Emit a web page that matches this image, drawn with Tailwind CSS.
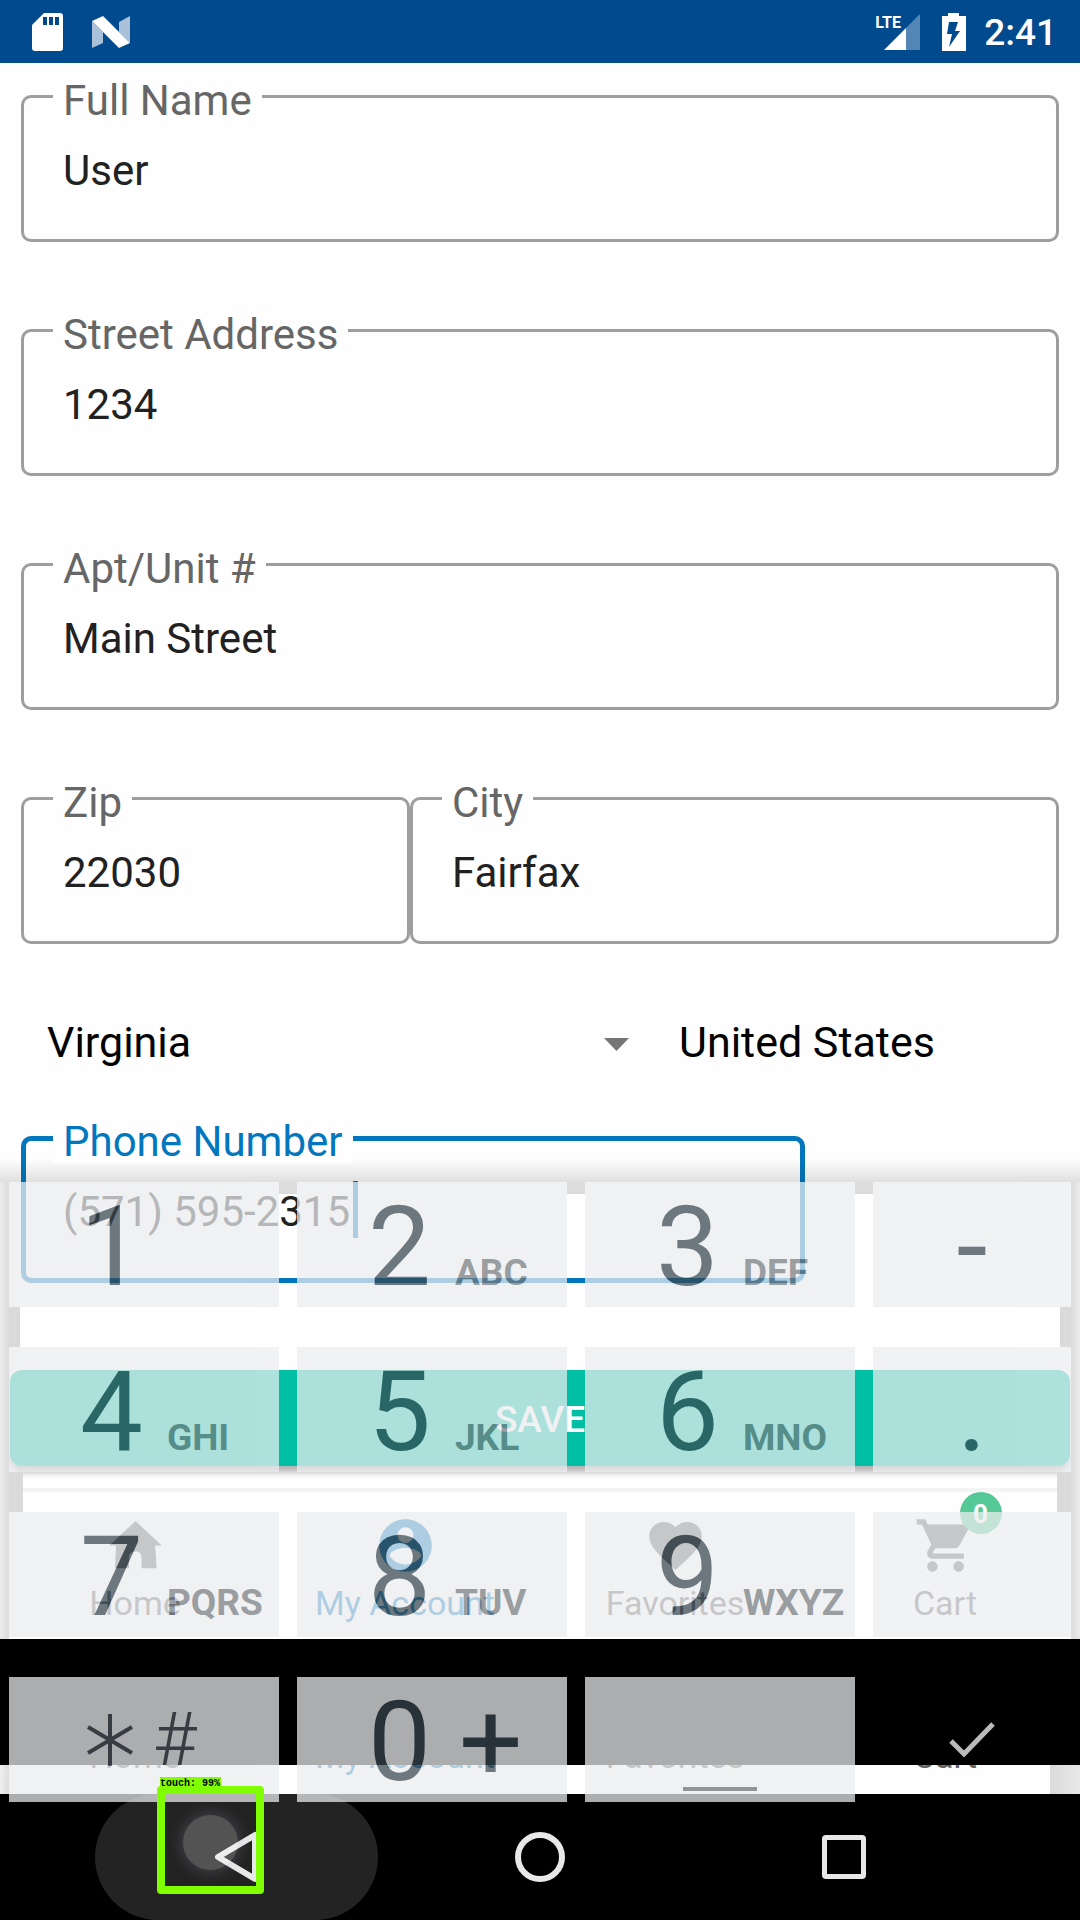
<!DOCTYPE html>
<html lang="en">
<head>
<meta charset="utf-8">
<meta name="viewport" content="width=device-width, initial-scale=1">
<title>Shipping address</title>
<script src="https://cdn.jsdelivr.net/npm/@tailwindcss/browser@4"></script>
</head>
<body class="bg-black">
<div class="relative flex min-h-screen w-full flex-col overflow-hidden bg-[#fefefe] font-['Roboto',sans-serif] text-[42px] leading-[42px] text-[#212121]">

  <!-- Status bar -->
  <header class="flex h-[63px] shrink-0 items-center justify-between bg-[#004a8d] pr-[23px] pl-8 text-white">
    <div class="flex items-center gap-[28px]">
      <svg class="h-[38px] w-[32px]" viewBox="0 0 32 38" fill="none" aria-label="SD card"><path fill="#fff" d="M12 0h16a3 3 0 0 1 3 3v32a3 3 0 0 1-3 3H3a3 3 0 0 1-3-3V12z"/><path fill="#004a8d" d="M11 4h4v8h-4zM17 4h4v8h-4zM23 4h4v8h-4z"/></svg>
      <svg class="h-[32px] w-[38px]" viewBox="0 0 38 32" aria-label="Android N"><path fill="#a9c0d8" d="M0 5l11 11v11L0 32zM27 6l11-6v27L27 16z"/><path fill="#fff" d="M0 5L11 0l27 27-11 5z"/></svg>
    </div>
    <div class="flex items-center">
      <div class="relative h-[38px] w-[46px]">
        <svg class="size-full" viewBox="0 0 46 38" aria-label="Signal"><path fill="#fff" d="M9 37L31 15v22z"/><path fill="#5486b5" d="M31 15L45 1v36H31z"/></svg>
        <span class="absolute top-0 left-0 font-['Liberation_Sans_Narrow','Roboto',sans-serif] text-[16px] leading-[20px] font-bold">LTE</span>
      </div>
      <svg class="ml-[21px] h-[38px] w-[24px]" viewBox="0 0 24 38" aria-label="Battery charging"><path fill="#fff" d="M6 0h11v3h7v35H0V3h6z"/><path fill="#004a8d" d="M7 9h9l-3 9h5L7 34l3-13H5z"/></svg>
      <time class="ml-[18px] pt-[2px] text-[37px] leading-[40px] font-medium">2:41</time>
    </div>
  </header>

  <main class="flex flex-1 flex-col">
    <form class="px-[21px] pt-8">
      <div class="grid gap-[87px]">
        <label class="relative block">
          <span class="absolute -top-[15px] left-8 bg-[#fefefe] px-[10px] text-[#666]">Full Name</span>
          <input type="text" value="User" class="block h-[147px] w-full rounded-[10px] border-3 border-[#9e9e9e] pt-1 pl-[39px]">
        </label>
        <label class="relative block">
          <span class="absolute -top-[15px] left-8 bg-[#fefefe] px-[10px] text-[#666]">Street Address</span>
          <input type="text" value="1234" class="block h-[147px] w-full rounded-[10px] border-3 border-[#9e9e9e] pt-1 pl-[39px]">
        </label>
        <label class="relative block">
          <span class="absolute -top-[15px] left-8 bg-[#fefefe] px-[10px] text-[#666]">Apt/Unit #</span>
          <input type="text" value="Main Street" class="block h-[147px] w-full rounded-[10px] border-3 border-[#9e9e9e] pt-1 pl-[39px]">
        </label>
        <div class="grid grid-cols-[389fr_649fr]">
          <label class="relative block">
            <span class="absolute -top-[15px] left-8 bg-[#fefefe] px-[10px] text-[#666]">Zip</span>
            <input type="text" value="22030" class="block h-[147px] w-full rounded-[10px] border-3 border-[#9e9e9e] pt-1 pl-[39px]">
          </label>
          <label class="relative block">
            <span class="absolute -top-[15px] left-8 bg-[#fefefe] px-[10px] text-[#666]">City</span>
            <input type="text" value="Fairfax" class="block h-[147px] w-full rounded-[10px] border-3 border-[#9e9e9e] pt-1 pl-[39px]">
          </label>
        </div>
      </div>

      <div class="grid h-[192px] grid-cols-[632fr_406fr] items-center text-black">
        <div class="flex items-center pr-6">
          <select aria-label="State" class="h-16 flex-1 appearance-none pt-1 pl-[26px] text-[43px] leading-[60px]"><option>Virginia</option></select>
          <svg class="mt-2 h-[13px] w-[25px]" viewBox="0 0 25 13" aria-hidden="true"><path fill="#757575" d="M0 0h25L12.500 13z"/></svg>
        </div>
        <select aria-label="Country" class="h-16 appearance-none pt-1 pl-[26px] text-[43px] leading-[60px]"><option>United States</option></select>
      </div>

      <div class="grid grid-cols-[784fr_254fr]">
        <label class="relative block">
          <span class="absolute -top-[15px] left-8 z-10 bg-[#fefefe] px-[10px] text-[#0277bd]">Phone Number</span>
          <input type="tel" value="(571) 595-2315" class="block h-[147px] w-full rounded-[10px] border-5 border-[#0277bd] pt-1 pl-[37px]">
          <span class="absolute top-[45px] left-[332px] h-[57px] w-[5px] bg-[#0277bd]"></span>
        </label>
      </div>

      <button type="button" class="-mx-[11px] mt-[87px] flex h-24 w-[calc(100%+22px)] items-center justify-center rounded-[12px] bg-[#00bfa5] pt-[4px] text-[37px] leading-[42px] font-medium text-white shadow-[0_6px_7px_rgba(0,0,0,0.3)]">SAVE</button>
    </form>

    <!-- Tab bar -->
    <nav class="mt-[22px] grid flex-1 grid-cols-4 border-t-4 border-[#f4f4f4] pt-[22px] text-[34px] leading-[36px] text-[#616161]">
      <a href="#" class="flex flex-col items-center gap-2">
        <svg class="size-[63px]" viewBox="0 0 24 24" fill="currentColor" aria-hidden="true"><path d="M12 2.700L2 12h2.600L4.200 20.700H9.500v-4.200c0-1.300 1-2.200 2.500-2.200s2.300.9 2.300 2.200v4.200H20l-.5-8.700H22z"/></svg>
        <span>Home</span>
      </a>
      <a href="#" class="flex flex-col items-center gap-2 text-[#0277bd]">
        <svg class="size-[63px]" viewBox="0 0 24 24" fill="currentColor" aria-hidden="true"><path d="M12 2C6.480 2 2 6.480 2 12s4.480 10 10 10 10-4.480 10-10S17.520 2 12 2zm0 3c1.660 0 3 1.340 3 3s-1.340 3-3 3-3-1.340-3-3 1.340-3 3-3zm0 14.200c-2.500 0-4.710-1.280-6-3.220.03-1.990 4-3.080 6-3.080 1.990 0 5.970 1.090 6 3.080-1.290 1.940-3.500 3.220-6 3.220z"/></svg>
        <span>My Account</span>
      </a>
      <a href="#" class="flex flex-col items-center gap-2">
        <svg class="size-[63px]" viewBox="0 0 24 24" fill="currentColor" aria-hidden="true"><path d="M12 21.350l-1.450-1.320C5.400 15.360 2 12.280 2 8.500 2 5.420 4.420 3 7.500 3c1.740 0 3.410.81 4.500 2.090C13.090 3.810 14.760 3 16.500 3 19.580 3 22 5.420 22 8.500c0 3.780-3.400 6.860-8.550 11.540L12 21.350z"/></svg>
        <span>Favorites</span>
      </a>
      <a href="#" class="flex flex-col items-center gap-2">
        <span class="relative">
          <svg class="size-[63px]" viewBox="0 0 24 24" fill="currentColor" aria-hidden="true"><path d="M7 18c-1.100 0-1.990.9-1.990 2S5.900 22 7 22s2-.9 2-2-.9-2-2-2zM1 2v2h2l3.600 7.590-1.350 2.450c-.16.28-.25.61-.25.96 0 1.100.9 2 2 2h12v-2H7.420c-.14 0-.25-.11-.25-.25l.03-.12.9-1.630h7.450c.75 0 1.410-.41 1.750-1.030l3.580-6.490A1 1 0 0 0 20 4H5.210l-.94-2H1zm16 16c-1.100 0-1.990.9-1.990 2s.89 2 1.990 2 2-.9 2-2-.9-2-2-2z"/></svg>
          <span class="absolute -top-[22px] left-[46px] flex size-[42px] items-center justify-center rounded-full bg-[#55c995] pt-[2px] text-[26px] leading-[30px] font-bold text-white">0</span>
        </span>
        <span>Cart</span>
      </a>
    </nav>
  </main>

  <div class="h-[126px] shrink-0 bg-black"></div>

  <!-- Lower edge of the tab bar as it slides away -->
  <div class="relative flex h-[29px] shrink-0 items-start overflow-hidden bg-[#fefefe] text-[34px] leading-[36px] text-[#616161]" aria-hidden="true">
    <div class="-mt-[27px] grid w-full grid-cols-4 text-center">
      <span>Home</span><span class="text-[#0277bd]">My Account</span><span>Favorites</span><span>Cart</span>
    </div>
    <span class="absolute inset-y-0 left-0 w-[9px] bg-linear-to-r from-[#f0f0f0] to-[#dcdcdc]"></span>
    <span class="absolute inset-y-0 right-0 w-[30px] bg-linear-to-l from-[#e8e8e8] to-[#dadada]"></span>
  </div>

  <!-- System navigation -->
  <nav class="relative flex h-[126px] shrink-0 items-center bg-black">
    <div class="grid w-full grid-cols-[473fr_134fr_473fr]">
      <button type="button" aria-label="Back" class="ml-[95px] flex h-[126px] w-[283px] items-center justify-center rounded-full bg-[#232323]">
        <svg class="h-[52px] w-[46px]" viewBox="0 0 46 52" fill="none" stroke="#e8e8e8" stroke-width="6" stroke-linejoin="round" aria-hidden="true"><path d="M4 26L41 4v44z"/></svg>
      </button>
      <button type="button" aria-label="Home" class="flex items-center justify-center"><span class="size-[50px] rounded-full border-6 border-[#e8e8e8]"></span></button>
      <button type="button" aria-label="Recent apps" class="flex items-center justify-center"><span class="size-[44px] rounded-[4px] border-5 border-[#e8e8e8]"></span></button>
    </div>
    <span class="absolute top-[21px] left-[183px] size-[55px] rounded-full bg-white/22 shadow-[0_0_16px_rgba(180,170,210,0.3)]"></span>
  </nav>

  <!-- Shadow above the keypad -->
  <div class="absolute inset-x-0 top-[1158px] h-[24px] bg-linear-to-b from-black/0 to-black/12"></div>

  <!-- Numeric keypad -->
  <section aria-label="Keypad" class="absolute inset-x-0 top-[1182px]">
    <div class="absolute top-0 left-0 h-[457px] w-[9px] bg-linear-to-r from-[#ececec] to-[#dcdcdc]"></div>
    <div class="absolute top-0 right-0 h-[457px] w-[9px] bg-linear-to-l from-[#ececec] to-[#dcdcdc]"></div>
    <div class="absolute inset-x-[9px] top-[125px] h-[40px] border-x-11 border-[#dadada]"></div>
    <div class="absolute inset-x-[9px] top-[290px] h-[40px] border-x-14 border-[#dadada]"></div>

    <div class="grid grid-cols-[270fr_270fr_270fr_198fr] gap-x-[18px] gap-y-[40px] px-[9px] text-[112px] leading-[130px] text-[#37474f]">
      <div class="relative"><button type="button" class="flex h-[125px] w-full items-baseline gap-6 bg-[#ecedf0] pl-[71px] opacity-73"><span>1</span></button><span class="absolute top-0 left-full h-3 w-[18px] bg-[#dcdcdc]"></span></div>
      <div class="relative"><button type="button" class="flex h-[125px] w-full items-baseline gap-6 bg-[#ecedf0] pl-[71px] opacity-73"><span>2</span><span class="text-[37px] font-bold text-[#767b7f]">ABC</span></button><span class="absolute top-0 left-full h-3 w-[18px] bg-[#dcdcdc]"></span></div>
      <div class="relative"><button type="button" class="flex h-[125px] w-full items-baseline gap-6 bg-[#ecedf0] pl-[71px] opacity-73"><span>3</span><span class="text-[37px] font-bold text-[#767b7f]">DEF</span></button><span class="absolute top-0 left-full h-3 w-[18px] bg-[#dcdcdc]"></span></div>
      <button type="button" class="flex h-[125px] items-baseline justify-center bg-[#ecedf0] opacity-73">-</button>

      <button type="button" class="flex h-[125px] items-baseline gap-6 bg-[#ecedf0] pl-[71px] opacity-73"><span>4</span><span class="text-[37px] font-bold text-[#767b7f]">GHI</span></button>
      <button type="button" class="flex h-[125px] items-baseline gap-6 bg-[#ecedf0] pl-[71px] opacity-73"><span>5</span><span class="text-[37px] font-bold text-[#767b7f]">JKL</span></button>
      <button type="button" class="flex h-[125px] items-baseline gap-6 bg-[#ecedf0] pl-[71px] opacity-73"><span>6</span><span class="text-[37px] font-bold text-[#767b7f]">MNO</span></button>
      <button type="button" class="flex h-[125px] items-baseline justify-center bg-[#ecedf0] opacity-73">.</button>

      <button type="button" class="flex h-[125px] items-baseline gap-6 bg-[#ecedf0] pl-[71px] opacity-73"><span>7</span><span class="text-[37px] font-bold text-[#767b7f]">PQRS</span></button>
      <button type="button" class="flex h-[125px] items-baseline gap-6 bg-[#ecedf0] pl-[71px] opacity-73"><span>8</span><span class="text-[37px] font-bold text-[#767b7f]">TUV</span></button>
      <button type="button" class="flex h-[125px] items-baseline gap-6 bg-[#ecedf0] pl-[71px] opacity-73"><span>9</span><span class="text-[37px] font-bold text-[#767b7f]">WXYZ</span></button>
      <button type="button" aria-label="Blank" class="h-[125px] bg-[#ecedf0] opacity-73"></button>

      <button type="button" aria-label="Star and hash" class="flex h-[125px] items-center gap-[20px] bg-[#ecedf0] pl-[78px] opacity-73">
        <svg class="h-[52px] w-[46px]" viewBox="0 0 46 52" fill="none" stroke="#4a5359" stroke-width="4" aria-hidden="true"><path d="M23 0v52M1 13l44 26M45 13L1 39"/></svg>
        <span class="text-[75px] leading-[125px] font-light text-[#4a5359]">#</span>
      </button>
      <button type="button" class="flex h-[125px] items-baseline gap-7 bg-[#ecedf0] pl-[71px] opacity-73"><span>0</span><span>+</span></button>
      <button type="button" aria-label="Space" class="flex h-[125px] items-end justify-center bg-[#ecedf0] pr-[1px] pb-[11px] opacity-73"><span class="h-1 w-[74px] bg-[#696c70]"></span></button>
      <button type="button" aria-label="Done" class="flex h-[125px] items-center justify-center opacity-73">
        <svg class="h-[36px] w-[46px]" viewBox="0 0 46 36" fill="none" stroke="#fff" stroke-width="5" aria-hidden="true"><path d="M2 19l13 13L44 2"/></svg>
      </button>
    </div>
  </section>

  <!-- Detected touch marker -->
  <div class="absolute top-[1777px] left-[157px] w-[107px]">
    <p class="ml-[3px] h-[13px] w-[61px] bg-[#80ff00] font-['Liberation_Mono',monospace] text-[10px] leading-[13px] font-bold whitespace-nowrap text-black">touch: 99%</p>
    <div class="-mt-1 h-[108px] rounded-[4px] border-8 border-[#80ff00]"></div>
  </div>
</div>
</body>
</html>
